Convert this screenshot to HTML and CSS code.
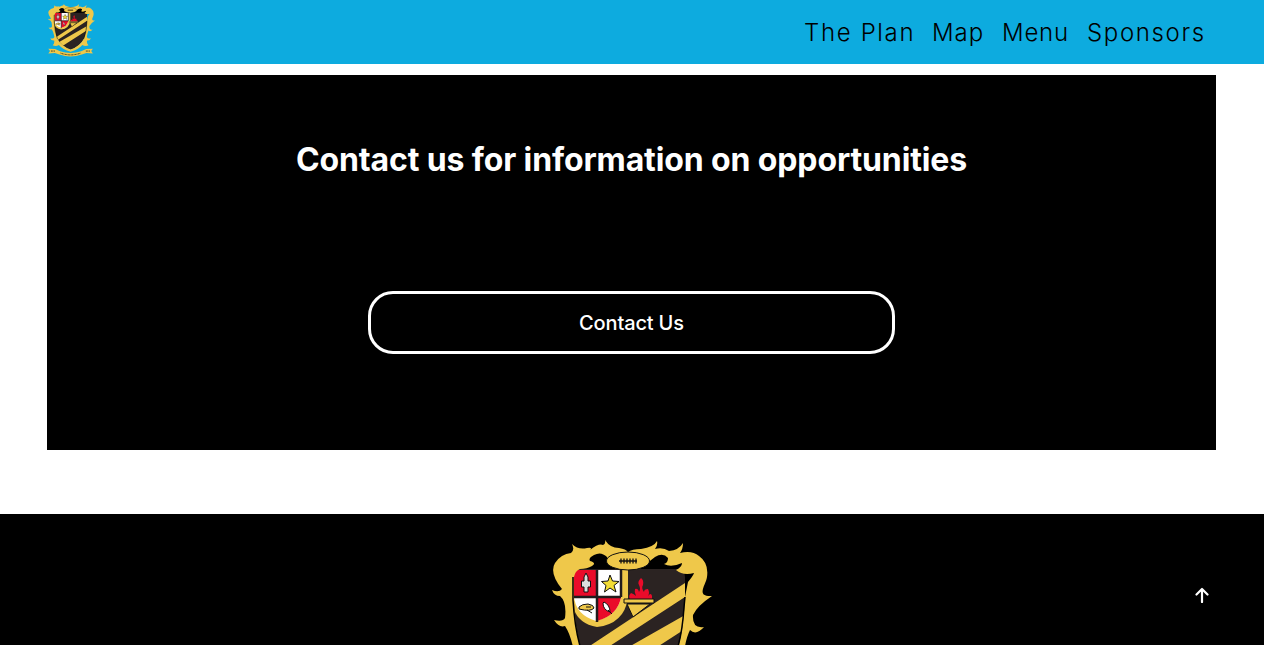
FILE: index.html
```html
<!DOCTYPE html>
<html lang="en">
<head>
<meta charset="utf-8">
<title>Contact</title>
<link rel="stylesheet" href="styles.css">
</head>
<body>
<svg class="defs" aria-hidden="true">
  <symbol id="crest" viewBox="7 5 160 180">
    <clipPath id="shield"><path d="M34 34H134Q140 36 140 42V62Q138 105 129 123Q117 147 84 160Q51 147 39 123Q30 100 29 65V40Q29 35 34 34Z"/></clipPath>
    <path class="ink" d="M40 24L50 15L65 19H104L120 17L140 30V62Q138 105 129 123Q117 147 84 160Q51 147 39 123Q30 100 27 60V34Z"/>
    <g clip-path="url(#shield)">
      <path class="dark" d="M27 33H142V166H27Z"/>
      <path class="gold" d="M28 122L140 48V62L28 135ZM45 134L140 80V94L55 149Z"/>
      <path class="gold" d="M28 35H83V63Q79 89 52 92Q31 88 28 70Z"/>
      <path class="white" d="M29 35H76V62Q73 80 51 86Q31 80 29 62Z"/>
      <path class="red" d="M29 35H52V62H29ZM52 62H76Q73 80 52 86Z"/>
      <path class="line" d="M52 34V87M29 62H76M76 34V62"/>
    </g>
    <path class="gold" d="M35 34Q30 36 29 42V65Q30 100 39 123Q51 147 84 160Q117 147 129 123Q138 105 140 62L143 47Q148 41 149 38Q138 41 131 35Q137 32 137 28Q126 33 119 29Q123 28 123 23Q118 17 110 22L101 29H65L62 22Q56 16 49 20Q43 23 45 26Q52 28 47 31Q42 34 35 34ZM10 28Q16 19 26 18Q30 15 27 9Q33 15 42 13Q48 12 45 15Q54 8 58 10Q61 9 60 5Q65 13 74 13Q81 14 83 17Q87 14 96 14Q109 12 112 6Q113 10 110 14Q118 12 124 16Q134 15 138 8Q138 14 135 18Q147 15 154 21Q164 28 162 42C161 50 150 62 167 61Q152 71 148 80Q147 94 159 92Q151 101 145 95Q141 103 139 117Q143 125 153 121Q151 130 140 129Q138 140 145 145Q134 151 124 144Q111 159 84 167Q57 159 44 144Q34 151 23 145Q30 140 28 129Q17 130 15 121Q25 125 29 117Q26 100 20 91Q14 93 9 85Q18 87 20 83Q22 67 15 61Q9 61 7 55Q14 58 17 54Q4 38 10 28Z" fill-rule="evenodd"/>
    <path class="gold" d="M8 157L31 158L48 166Q84 178 120 166L137 158L160 157L154 165L160 173L138 172L122 177Q84 190 46 177L30 172L8 173L14 165Z"/>
    <path class="seam" d="M140 62L139 72Q137 104 129 123M28 42V65Q30 100 39 123"/>
    <ellipse class="gold outline" cx="83" cy="26" rx="21.5" ry="9"/>
    <path class="mark" d="M74 26H92M76 23.500V28.500M79 23.500V28.500M82 23.500V28.500M85 23.500V28.500M88 23.500V28.500M91 23.500V28.500"/>
    <path class="missile outline" d="M39 42L41 38L43 42V46H45.500V52H43V57H39V52H36.500V46H39Z"/>
    <path class="star" d="M65 40L67.500 46L74 46.500L69 50.500L71 57L65 53L59.500 57L61 50.500L56.500 46.500L63 46Z"/>
    <path class="gold outline" d="M34 72Q37 69 43 69Q49 70 49 73Q46 77 34 74ZM41 72H46M42 75L47 78"/>
    <path class="white outline" d="M59 67Q65 70 65 77Q58 75 58 68ZM63 75L67 79"/>
    <path class="red" d="M85 64Q83 61 86 58Q89 59 91 61Q89 57 90 54Q93 53 94 57Q96 54 94 50Q92 47 96 43Q99 45 98 50Q96 53 99 57Q99 54 103 54Q105 58 103 61Q106 57 107 61V64Z"/>
    <path class="gold outline" d="M79 64H109V68H79ZM82 69H105L88 82Z"/>
    <path class="mark lettering" d="M17 165H32M50 172Q84 184 118 172M136 165H151"/>
  </symbol>
</svg>
<header class="bar">
  <svg class="brand"><use href="#crest"/></svg>
  <nav class="links"><a class="plan">The Plan</a><a class="map">Map</a><a class="menu">Menu</a><a class="sponsors">Sponsors</a></nav>
</header>
<main class="panel">
  <h1 class="title">Contact us for information on opportunities</h1>
  <a class="button">Contact Us</a>
</main>
<footer class="footer">
  <svg class="crest"><use href="#crest"/></svg>
  <svg class="top" viewBox="0 0 14 16"><path d="M7 15V2M1.500 7.500L7 2L12.500 7.500"/></svg>
</footer>
</body>
</html>
```
FILE: styles.css
```css
body { margin: 0; height: 645px; overflow: hidden; background: #fff; font-family: Inter, "Liberation Sans", sans-serif; }
.defs { position: absolute; width: 0; height: 0; }
.bar { height: 64px; background: #0dabdf; display: flex; justify-content: space-between; box-sizing: border-box; padding: 4px 57px 0 48px; }
.brand { width: 47px; height: 53px; }
.links { display: flex; gap: 19px; font-size: 24px; font-weight: 300; line-height: 58px; letter-spacing: 1.65px; white-space: nowrap; color: #000; }
.links a { margin-left: -1px; margin-right: 1px; }
.plan { width: 109px; }
.map { width: 51px; letter-spacing: 1px; }
.menu { width: 66px; letter-spacing: 0.8px; }
.sponsors { width: 119px; }
.panel { margin: 11px 48px 64px 47px; height: 375px; background: #000; color: #fff; display: flex; flex-direction: column; align-items: center; }
.title { margin: 61px 0 107px; font-size: 32px; font-weight: 700; line-height: 48px; letter-spacing: -0.12px; white-space: nowrap; }
.button { box-sizing: border-box; width: 527px; height: 63px; border: 3px solid #fff; border-radius: 25px; text-align: center; font-size: 20px; font-weight: 500; line-height: 59px; letter-spacing: -0.15px; }
.footer { height: 131px; background: #000; display: grid; grid-template-columns: 1fr 160px 1fr; overflow: hidden; }
.crest { grid-column: 2; width: 160px; height: 180px; margin-top: 26px; }
.top { justify-self: end; width: 14px; height: 16px; margin: 73px 55px 0 0; fill: none; stroke: #fff; stroke-width: 2.2; stroke-linecap: round; stroke-linejoin: round; }
.gold { fill: #efc84a; }
.dark { fill: #2b2322; }
.red { fill: #ea0b2a; }
.white { fill: #fff; }
.missile { fill: #ddd; }
.ink { fill: #000; }
.line { fill: none; stroke: #211b1c; stroke-width: 2.5; }
.seam { fill: none; stroke: #000; stroke-width: 1.5; }
.outline { stroke: #111; stroke-width: 1; }
.mark { fill: none; stroke: #111; stroke-width: 1.3; }
.lettering { stroke-width: 3; stroke-dasharray: 3 2; }
.star { fill: #f2dc35; stroke: #111; stroke-width: 1; }
```
